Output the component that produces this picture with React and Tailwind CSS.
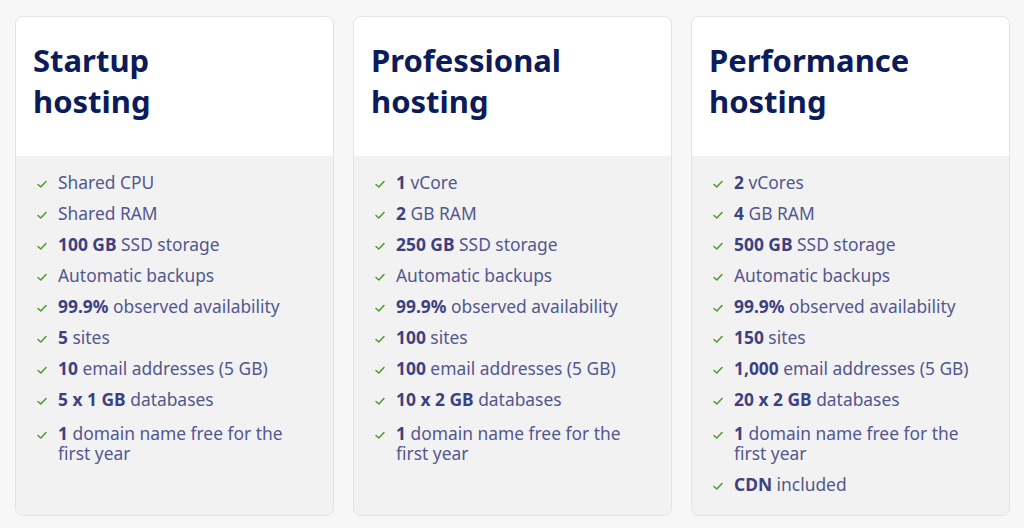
import React from "react";

const plans = [
  {
    title: ["Startup", "hosting"],
    items: [
      [null, "Shared CPU"],
      [null, "Shared RAM"],
      ["100 GB", " SSD storage"],
      [null, "Automatic backups"],
      ["99.9%", " observed availability"],
      ["5", " sites"],
      ["10", " email addresses (5 GB)"],
      ["5 x 1 GB", " databases"],
      ["1", " domain name free for the first year"],
    ],
  },
  {
    title: ["Professional", "hosting"],
    items: [
      ["1", " vCore"],
      ["2", " GB RAM"],
      ["250 GB", " SSD storage"],
      [null, "Automatic backups"],
      ["99.9%", " observed availability"],
      ["100", " sites"],
      ["100", " email addresses (5 GB)"],
      ["10 x 2 GB", " databases"],
      ["1", " domain name free for the first year"],
    ],
  },
  {
    title: ["Performance", "hosting"],
    items: [
      ["2", " vCores"],
      ["4", " GB RAM"],
      ["500 GB", " SSD storage"],
      [null, "Automatic backups"],
      ["99.9%", " observed availability"],
      ["150", " sites"],
      ["1,000", " email addresses (5 GB)"],
      ["20 x 2 GB", " databases"],
      ["1", " domain name free for the first year"],
      ["CDN", " included"],
    ],
  },
];

const Check = () => (
  <svg width="12" height="10" viewBox="0 0 12 10" className="shrink-0 mt-[7px]">
    <path d="M2 5.5 L4.8 8 L10 2.5" fill="none" stroke="#4d9a2a" strokeWidth="1.5" strokeLinecap="round" strokeLinejoin="round" />
  </svg>
);

function PlanCard({ plan }) {
  return (
    <div className="w-[319px] h-[500px] rounded-[8px] border border-[#e3e3e3] overflow-hidden flex flex-col">
      <div className="bg-white h-[139px] shrink-0 pl-[17px] pt-[23px]">
        <h2 className="text-[31px] leading-[41px] font-bold text-[#0c1c5a]">
          {plan.title[0]}
          <br />
          {plan.title[1]}
        </h2>
      </div>
      <div className="flex-1 bg-[#f2f2f2] pl-[20px] pr-[40px] pt-[16px]">
        <ul className="flex flex-col gap-[11px]">
          {plan.items.map(([b, t], i) => (
            <li
              key={i}
              className={`flex items-start gap-[10px] text-[17.4px] leading-[20px] text-[#53578f] ${i === 8 ? "pt-[3px]" : ""}`}
            >
              <Check />
              <span>
                {b && <b className="font-bold text-[#3d4182]">{b}</b>}
                {t}
              </span>
            </li>
          ))}
        </ul>
      </div>
    </div>
  );
}

export default function App() {
  return (
    <div className="min-h-screen bg-[#f7f7f7] flex gap-[19px] pl-[15px] pt-[16px]" style={{ fontFamily: '"Noto Sans", sans-serif' }}>
      {plans.map((p, i) => (
        <PlanCard key={i} plan={p} />
      ))}
    </div>
  );
}
